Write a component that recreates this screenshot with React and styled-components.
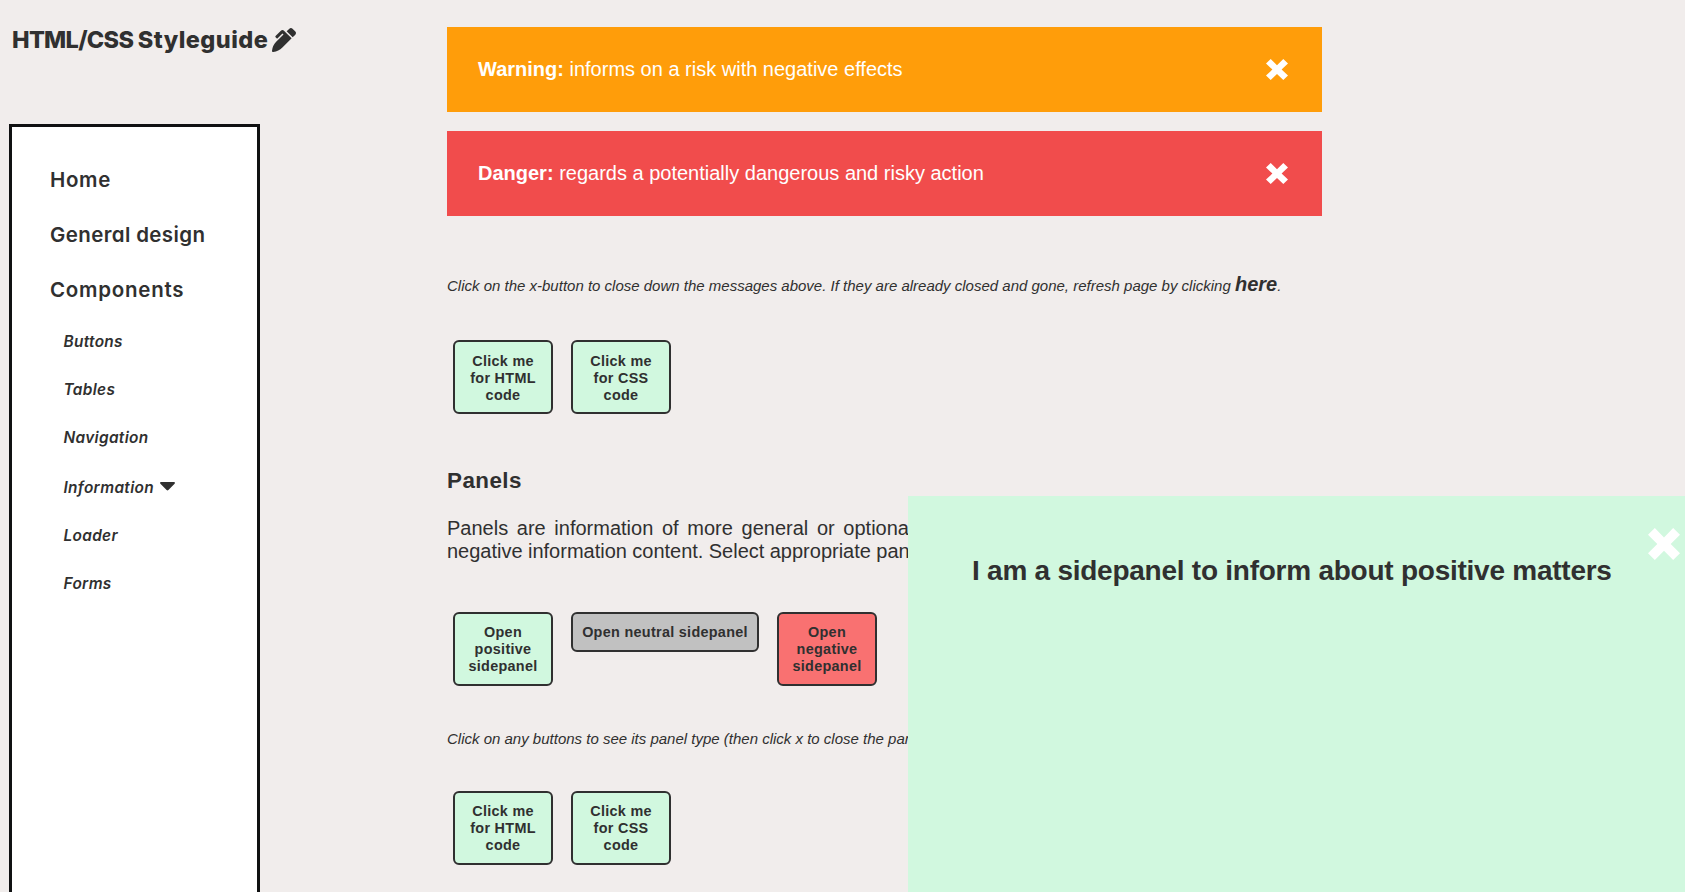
import React from "react";
import styled, { createGlobalStyle } from "styled-components";
import { FaPenAlt } from "react-icons/fa";

const ink = "#303030";

const GlobalStyle = createGlobalStyle`
  * { box-sizing: border-box; }
  html, body { margin: 0; height: 100%; overflow: hidden; }
  body {
    background: #f1edec;
    color: ${ink};
    font-family: "Liberation Sans", Arial, sans-serif;
  }
`;

const Page = styled.div`
  display: flex;
  height: 892px;
  overflow: hidden;
`;

const Aside = styled.aside`
  flex: none;
  width: 447px;
  display: flex;
  flex-direction: column;
  font-family: Inter, sans-serif;
  font-feature-settings: "cv11";
`;

const Logo = styled.h1`
  display: flex;
  align-items: center;
  height: 124px;
  margin: 0;
  padding: 0 0 45px 12px;
  font-size: 23.5px;
  font-weight: 800;
  white-space: nowrap;
`;

const LogoText = styled.span`
  width: 260px;
  letter-spacing: 0.45px;
`;

const LogoLead = styled.span`
  letter-spacing: -0.7px;
`;

const Nav = styled.nav`
  flex: 1;
  width: 251px;
  margin-left: 9px;
  padding-top: 25px;
  background: #fff;
  border: 3px solid #101112;
  border-bottom: 0;
`;

const NavItem = styled.a`
  display: flex;
  align-items: center;
  height: 55px;
  padding-left: 38px;
  font-size: 20.5px;
  font-weight: 580;
  letter-spacing: ${(p) => p.$track || 0}px;
  white-space: nowrap;
`;

const SubItem = styled(NavItem)`
  height: ${(p) => p.$height || 48}px;
  gap: 6px;
  padding-left: 51.5px;
  font-size: 15.4px;
  font-style: italic;
  letter-spacing: 0.33px;
`;

const Main = styled.main`
  width: 875px;
  padding-top: 27px;
`;

const Alert = styled.div`
  display: flex;
  align-items: center;
  justify-content: space-between;
  height: 85px;
  margin-bottom: 19px;
  padding: 0 34px 0 31px;
  background: ${(p) => p.$color};
  color: #fff;
  font-size: 20px;

  svg {
    margin-bottom: 1px;
  }
`;

const Note = styled.p`
  margin: ${(p) => p.$top || 0}px 0 0;
  height: 24px;
  font-size: 15px;
  line-height: 24px;
  font-style: italic;
  white-space: nowrap;
`;

const HereLink = styled.a`
  font-size: 20px;
  font-weight: 700;
`;

const ButtonRow = styled.div`
  display: flex;
  align-items: flex-start;
  gap: 18px;
  height: 74px;
  margin: ${(p) => p.$margin};
  padding-left: 6px;
`;

const tones = { positive: "#d1f8df", neutral: "#c1c1c1", negative: "#f97171" };

const Button = styled.button`
  width: ${(p) => (p.$wide ? 188 : 100)}px;
  padding: ${(p) => (p.$low ? "11px 0 8px" : "10px 0 9px")};
  border: 2px solid ${ink};
  border-radius: 6px;
  background: ${(p) => tones[p.$tone]};
  color: ${ink};
  font: 700 14.4px/17px "Liberation Sans", Arial, sans-serif;
  letter-spacing: 0.3px;
  text-align: center;
  white-space: pre-line;
`;

const Heading = styled.h2`
  margin: 0;
  font-size: 22.4px;
  line-height: 28px;
  letter-spacing: 0.45px;
`;

const Paragraph = styled.p`
  margin: 22px 0 0;
  font-size: 20px;
  line-height: 23px;
  white-space: nowrap;
`;

const Line = styled.span`
  display: block;
  word-spacing: ${(p) => p.$gap}px;
`;

const SidePanel = styled.section`
  position: fixed;
  right: 0;
  bottom: 0;
  width: 777px;
  height: 396px;
  padding: 57px 0 0 64px;
  background: ${tones.positive};
`;

const PanelTitle = styled.h2`
  margin: 0;
  font-size: 28px;
  line-height: 36px;
  letter-spacing: -0.25px;
  white-space: nowrap;
`;

const PanelClose = styled.div`
  position: absolute;
  top: 32px;
  right: 5px;
  display: flex;
`;

const Cross = ({ width, height }) => (
  <svg width={width} height={height} viewBox="0 0 22 21" preserveAspectRatio="none" fill="#fff">
    <path d="M4.7 0 11 6.2 17.3 0 22 4.5 15.6 10.5 22 16.6 17.3 21 11 14.9 4.7 21 0 16.6 6.4 10.5 0 4.5Z" />
  </svg>
);

const Caret = () => (
  <svg width="15" height="9" viewBox="0 0 15 9" fill={ink}>
    <path d="M1.2 0h12.6c1 0 1.5 1 .8 1.7L8.4 8c-.5.6-1.3.6-1.8 0L.4 1.7C-.3 1 .2 0 1.2 0Z" />
  </svg>
);

const SubLabel = styled.span`
  padding-top: 2px;
`;

const CodeButtons = ({ margin, low }) => (
  <ButtonRow $margin={margin}>
    <Button $tone="positive" $low={low}>{"Click me\nfor HTML\ncode"}</Button>
    <Button $tone="positive" $low={low}>{"Click me\nfor CSS\ncode"}</Button>
  </ButtonRow>
);

export default function App() {
  return (
    <>
      <GlobalStyle />
      <Page>
        <Aside>
          <Logo>
            <LogoText><LogoLead>HTML/CSS </LogoLead>Styleguide</LogoText>
            <FaPenAlt size={24} />
          </Logo>
          <Nav>
            <NavItem $track={0.65}>Home</NavItem>
            <NavItem $track={0.38}>General design</NavItem>
            <NavItem $track={0.75}>Components</NavItem>
            <SubItem>Buttons</SubItem>
            <SubItem>Tables</SubItem>
            <SubItem>Navigation</SubItem>
            <SubItem $height={50}><SubLabel>Information</SubLabel> <Caret /></SubItem>
            <SubItem>Loader</SubItem>
            <SubItem>Forms</SubItem>
          </Nav>
        </Aside>
        <Main>
          <Alert $color="#ff9d0a">
            <span><b>Warning:</b> informs on a risk with negative effects</span>
            <Cross width={22} height={21} />
          </Alert>
          <Alert $color="#f14c4c">
            <span><b>Danger:</b> regards a potentially dangerous and risky action</span>
            <Cross width={22} height={21} />
          </Alert>
          <Note $top={56}>
            Click on the x-button to close down the messages above. If they are already closed and gone, refresh page by clicking <HereLink>here</HereLink>.
          </Note>
          <CodeButtons margin="44px 0 53px" low />
          <Heading>Panels</Heading>
          <Paragraph>
            <Line $gap={3.1}>Panels are information of more general or optional</Line>
            <Line $gap={-0.2}>negative information content. Select appropriate panel</Line>
          </Paragraph>
          <ButtonRow $margin="49px 0 41px">
            <Button $tone="positive">{"Open\npositive\nsidepanel"}</Button>
            <Button $tone="neutral" $wide>Open neutral sidepanel</Button>
            <Button $tone="negative">{"Open\nnegative\nsidepanel"}</Button>
          </ButtonRow>
          <Note>Click on any buttons to see its panel type (then click x to close the panel)</Note>
          <CodeButtons margin="40px 0 0" />
        </Main>
      </Page>
      <SidePanel>
        <PanelTitle>I am a sidepanel to inform about positive matters</PanelTitle>
        <PanelClose><Cross width={32} height={32} /></PanelClose>
      </SidePanel>
    </>
  );
}
